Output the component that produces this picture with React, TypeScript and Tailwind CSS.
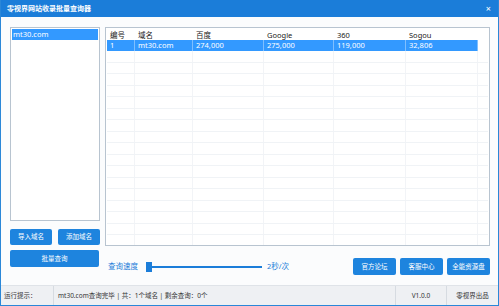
const font = "font-['Noto_Sans','Noto_Sans_CJK_SC',sans-serif]";

const cols = [
  { name: "编号", w: "w-[28px]" },
  { name: "域名", w: "w-[58px]" },
  { name: "百度", w: "w-[71px]" },
  { name: "Google", w: "w-[70px]" },
  { name: "360", w: "w-[72px]" },
  { name: "Sogou", w: "w-[72px]" },
];

const row = ["1", "mt30.com", "274,000", "275,000", "119,000", "32,806"];

function Btn({ label, className }: { label: string; className: string }) {
  return (
    <button className={`flex items-center justify-center rounded-[2px] bg-[#1e84de] text-[6.5px] text-white ${className}`}>
      {label}
    </button>
  );
}

export default function App() {
  const emptyRows = Array.from({ length: 17 });
  return (
    <div className={`${font} flex h-[306px] w-[499px] flex-col overflow-hidden border-x border-b border-[#2a87d8] bg-white`}>
      {/* title bar */}
      <div className="flex h-[17px] shrink-0 items-center justify-between bg-[#1b7dd9] pl-[6px] pr-[7px] text-white">
        <span className="text-[7px] font-bold leading-none">零视界网站收录批量查询器</span>
        <span className="text-[9px] leading-none">×</span>
      </div>

      {/* main */}
      <div className="flex flex-1 gap-[5px] bg-[#fbfcfd] pl-[9px] pr-[8px] pt-[10px]">
        {/* left */}
        <div className="flex w-[90px] flex-col">
          <div className="h-[194px] border border-[#b8c4d0] bg-white p-px">
            <div className="h-[11px] bg-[#3399ff] pl-[1px] text-[7.5px] leading-[11px] text-white">mt30.com</div>
          </div>
          <div className="mt-[8px] flex justify-between">
            <Btn label="导入域名" className="h-[16px] w-[42px]" />
            <Btn label="添加域名" className="h-[16px] w-[42px]" />
          </div>
          <Btn label="批量查询" className="mt-[5px] h-[17px] w-[89px]" />
        </div>

        {/* right */}
        <div className="flex flex-1 flex-col">
          <div className="relative h-[219px] overflow-hidden border border-[#b8c4d0] bg-white p-px">
            <div className="flex h-[11px] text-[7.5px] leading-[12px] text-[#222]">
              {cols.map((c) => (
                <div key={c.name} className={`${c.w} pl-[3px]`}>
                  {c.name}
                </div>
              ))}
            </div>
            <div className="flex h-[11px] w-fit bg-[#3399ff] text-[7.5px] leading-[11px] text-white">
              {row.map((v, i) => (
                <div key={i} className={`${cols[i].w} border-r border-[#7fbfff] pl-[3px]`}>
                  {v}
                </div>
              ))}
            </div>
            {emptyRows.map((_, i) => (
              <div key={i} className="flex h-[11.5px] border-b border-[#f0f3f6]">
                {cols.map((c) => (
                  <div key={c.name} className={`${c.w} border-r border-[#f2f4f7]`} />
                ))}
              </div>
            ))}
          </div>

          <div className="mt-[12px] flex items-center">
            <span className="ml-[3px] w-[30px] text-[7.5px] text-[#1b7dd9]">查询速度</span>
            <div className="ml-[8px] h-[10px] w-[6px] bg-[#1b7dd9]" />
            <div className="h-[2px] w-[110px] bg-[#1b7dd9]" />
            <span className="ml-[5px] text-[7.5px] text-[#1b7dd9]">2秒/次</span>
            <div className="ml-auto flex gap-[4px]">
              <Btn label="官方论坛" className="h-[17px] w-[43px]" />
              <Btn label="客服中心" className="h-[17px] w-[43px]" />
              <Btn label="全能资源盘" className="h-[17px] w-[43px]" />
            </div>
          </div>
        </div>
      </div>

      {/* status bar */}
      <div className="flex h-[20px] shrink-0 items-center border-t border-[#dfe3e8] bg-[#eef0f3] text-[6.5px] text-[#333]">
        <div className="w-[52px] pl-[3px]">运行提示：</div>
        <div className="h-full w-[342px] border-l border-[#d6dbe1] pl-[4px] leading-[20px]">
          mt30.com查询完毕 | 共：1个域名 | 剩余查询：0个
        </div>
        <div className="h-full w-[51px] border-l border-[#d6dbe1] text-center leading-[20px]">V1.0.0</div>
        <div className="h-full flex-1 border-l border-[#d6dbe1] text-center leading-[20px]">零视界出品</div>
      </div>
    </div>
  );
}
